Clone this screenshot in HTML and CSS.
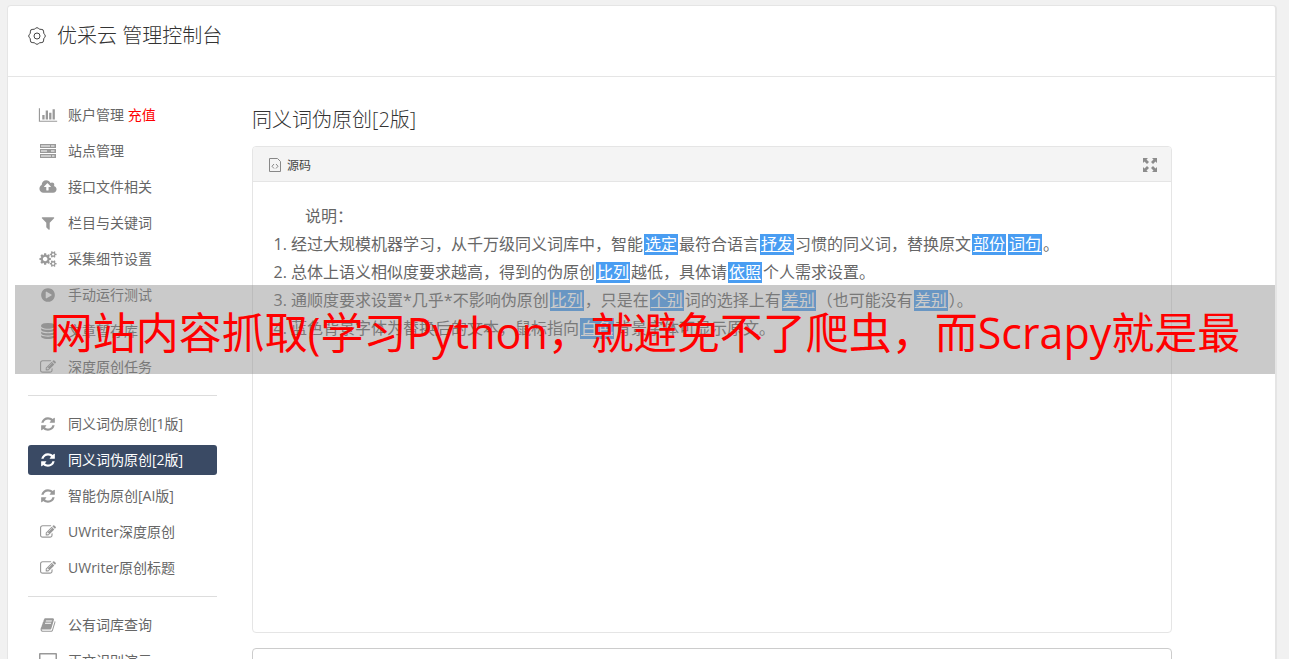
FILE: index.html
```html
<!DOCTYPE html>
<html lang="zh-CN">
<head>
  <meta charset="UTF-8">
  <meta name="viewport" content="width=device-width, initial-scale=1.0">
  <title>优采云 管理控制台</title>
  <link rel="stylesheet" href="styles.css">
</head>
<body>
  <svg class="sprite" aria-hidden="true">
    <symbol id="i-chart" viewBox="0 0 2048 1792"><path d="M640 896v512h-256v-512h256zm384-512v1024h-256v-1024h256zm1024 1152v128h-2048v-1536h128v1408h1920zm-640-896v768h-256v-768h256zm384-384v1152h-256v-1152h256z"/></symbol>
    <symbol id="i-server" viewBox="0 0 18 16"><path fill-rule="evenodd" d="M1 1h16v4H1zM2 2v2h9V2zM12 2.500v1h3.500v-1zM1 6h16v4H1zM2 7v2h6V7zM12 7.500v1h3.500v-1zM1 11h16v4H1zM2 12v2h10v-2zM13 12.500v1h2.500v-1z"/><path opacity=".5" d="M2 2h9v2H2zM2 7h6v2H2zM2 12h10v2H2z"/></symbol>
    <symbol id="i-cloud" viewBox="0 0 1920 1792"><path d="M1280 864q0-14-9-23l-352-352q-9-9-23-9t-23 9l-351 351q-10 12-10 24 0 14 9 23t23 9h224v352q0 13 9.500 22.500t22.500 9.500h192q13 0 22.500-9.500t9.500-22.500v-352h224q13 0 22.500-9.500t9.500-22.500zm640 288q0 159-112.500 271.500t-271.500 112.500h-1088q-185 0-316.500-131.500t-131.500-316.500q0-130 70-240t188-165q-2-30-2-43 0-212 150-362t362-150q156 0 285.500 87t188.500 231q71-62 166-62 106 0 181 75t75 181q0 76-41 138 130 31 213.500 135.500t83.500 238.500z"/></symbol>
    <symbol id="i-filter" viewBox="0 0 1792 1792"><path d="M1595 295q17 41-14 70l-493 493v742q0 42-39 59-13 5-25 5-27 0-45-19l-256-256q-19-19-19-45v-486l-493-493q-31-29-14-70 17-39 59-39h1280q42 0 59 39z"/></symbol>
    <symbol id="i-cogs" viewBox="0 0 1920 1792"><path d="M896 896q0-106-75-181t-181-75-181 75-75 181 75 181 181 75 181-75 75-181zm768 512q0-52-38-90t-90-38-90 38-38 90q0 53 37.500 90.500t90.500 37.500 90.500-37.500 37.500-90.500zm0-1024q0-52-38-90t-90-38-90 38-38 90q0 53 37.500 90.500t90.500 37.500 90.500-37.500 37.500-90.500zm-384 421v185q0 10-7 19.500t-16 10.500l-155 24q-11 35-32 76 34 48 90 115 7 11 7 20 0 12-7 19-23 30-82.500 89.500t-78.500 59.500q-11 0-21-7l-115-90q-37 19-77 31-11 108-23 155-7 24-30 24h-186q-11 0-20-7.500t-10-17.500l-23-153q-34-10-75-31l-118 89q-7 7-20 7-11 0-21-8-144-133-144-160 0-9 7-19 10-14 41-53t47-61q-23-44-35-82l-152-24q-10-1-17-9.500t-7-19.500v-185q0-10 7-19.500t16-10.500l155-24q11-35 32-76-34-48-90-115-7-11-7-20 0-12 7-20 22-30 82-89t79-59q11 0 21 7l115 90q34-18 77-32 11-108 23-154 7-24 30-24h186q11 0 20 7.500t10 17.500l23 153q34 10 75 31l118-89q8-7 20-7 11 0 21 8 144 133 144 160 0 8-7 19-12 16-42 54t-45 60q23 48 34 82l152 23q10 2 17 10.500t7 19.500zm640 533v140q0 16-149 31-12 27-30 52 51 113 51 138 0 4-4 7-122 71-124 71-8 0-46-47t-52-68q-20 2-30 2t-30-2q-14 21-52 68t-46 47q-2 0-124-71-4-3-4-7 0-25 51-138-18-25-30-52-149-15-149-31v-140q0-16 149-31 13-29 30-52-51-113-51-138 0-4 4-7 4-2 35-20t59-34 30-16q8 0 46 46.500t52 67.500q20-2 30-2t30 2q51-71 92-112l6-2q4 0 124 70 4 3 4 7 0 25-51 138 17 23 30 52 149 15 149 31zm0-1024v140q0 16-149 31-12 27-30 52 51 113 51 138 0 4-4 7-122 71-124 71-8 0-46-47t-52-68q-20 2-30 2t-30-2q-14 21-52 68t-46 47q-2 0-124-71-4-3-4-7 0-25 51-138-18-25-30-52-149-15-149-31v-140q0-16 149-31 13-29 30-52-51-113-51-138 0-4 4-7 4-2 35-20t59-34 30-16q8 0 46 46.500t52 67.500q20-2 30-2t30 2q51-71 92-112l6-2q4 0 124 70 4 3 4 7 0 25-51 138 17 23 30 52 149 15 149 31z"/></symbol>
    <symbol id="i-play" viewBox="0 0 1792 1792"><path d="M896 128q209 0 385.500 103t279.500 279.500 103 385.500-103 385.500-279.500 279.500-385.500 103-385.500-103-279.500-279.500-103-385.500 103-385.500 279.500-279.500 385.500-103zm384 823q32-18 32-55t-32-55l-544-320q-31-19-64-1-32 19-32 56v640q0 37 32 56 16 8 32 8 17 0 32-9z"/></symbol>
    <symbol id="i-database" viewBox="0 0 1792 1792"><path d="M896 768q237 0 443-43t325-127v170q0 69-103 128t-280 93.500-385 34.500-385-34.500-280-93.500-103-128v-170q119 84 325 127t443 43zm0 768q237 0 443-43t325-127v170q0 69-103 128t-280 93.500-385 34.500-385-34.500-280-93.500-103-128v-170q119 84 325 127t443 43zm0-384q237 0 443-43t325-127v170q0 69-103 128t-280 93.500-385 34.500-385-34.500-280-93.500-103-128v-170q119 84 325 127t443 43zm0-1152q208 0 385 34.500t280 93.500 103 128v128q0 69-103 128t-280 93.500-385 34.500-385-34.500-280-93.500-103-128v-128q0-69 103-128t280-93.500 385-34.500z"/></symbol>
    <symbol id="i-edit" viewBox="0 0 1792 1792"><path d="M888 1184l116-116-152-152-116 116v56h96v96h56zm440-720q-16-16-33 1l-350 350q-17 17-1 33t33-1l350-350q17-17 1-33zm80 594v190q0 119-84.500 203.500t-203.500 84.500h-832q-119 0-203.500-84.500t-84.500-203.500v-832q0-119 84.500-203.500t203.500-84.500h832q63 0 117 25 15 7 18 23 3 17-9 29l-49 49q-14 14-32 8-23-6-45-6h-832q-66 0-113 47t-47 113v832q0 66 47 113t113 47h832q66 0 113-47t47-113v-126q0-13 9-22l64-64q15-15 35-7t20 29zm-96-738l288 288-672 672h-288v-288zm444 132l-92 92-288-288 92-92q28-28 68-28t68 28l152 152q28 28 28 68t-28 68z"/></symbol>
    <symbol id="i-refresh" viewBox="0 0 1792 1792"><path d="M1639 1056q0 5-1 7-64 268-268 434.500t-478 166.500q-146 0-282.500-55t-243.500-157l-129 129q-19 19-45 19t-45-19-19-45v-448q0-26 19-45t45-19h448q26 0 45 19t19 45-19 45l-137 137q71 66 161 102t187 36q134 0 250-65t186-179q11-17 53-117 8-23 30-23h192q13 0 22.500 9.500t9.500 22.500zm25-800v448q0 26-19 45t-45 19h-448q-26 0-45-19t-19-45 19-45l138-138q-148-137-349-137-134 0-250 65t-186 179q-11 17-53 117-8 23-30 23h-199q-13 0-22.500-9.500t-9.500-22.500v-7q65-268 270-434.500t480-166.500q146 0 284 55.500t245 156.500l130-129q19-19 45-19t45 19 19 45z"/></symbol>
    <symbol id="i-book" viewBox="0 0 1792 1792"><path d="M1703 478q40 57 18 129l-275 906q-19 64-76.500 107.500t-122.500 43.500h-923q-77 0-148.500-53.500t-99.500-131.500q-24-67-2-127 0-4 3-27t4-37q1-8-3-21.500t-3-19.500q2-11 8-21t16.500-23.500 16.500-23.500q23-38 45-91.500t30-91.500q3-10 .5-30t-.5-28q3-11 17-28t17-23q21-36 42-92t25-90q1-9-2.500-32t.5-28q4-13 22-30.500t22-22.500q19-26 42.500-84.500t27.500-96.500q1-8-3-25.500t-2-26.500q2-8 9-18t18-23 17-21q8-12 16.500-30.500t15-35 16-36 19.500-32 26.500-23.500 36-11.500 47.500 5.500l-1 3q38-9 51-9h761q74 0 114 56t18 130l-274 906q-36 119-71.500 153.500t-128.500 34.500h-869q-27 0-38 15-11 16-1 43 24 70 144 70h923q29 0 56-15.500t35-41.500l300-987q7-22 5-57 38 15 59 43zm-1064 2q-4 13 2 22.500t20 9.500h608q13 0 25.500-9.500t16.500-22.500l21-64q4-13-2-22.500t-20-9.500h-608q-13 0-25.500 9.500t-16.500 22.500zm-83 256q-4 13 2 22.500t20 9.500h608q13 0 25.500-9.500t16.500-22.500l21-64q4-13-2-22.500t-20-9.500h-608q-13 0-25.500 9.500t-16.500 22.500z"/></symbol>
    <symbol id="i-screen" viewBox="0 0 18 16"><path fill-rule="evenodd" d="M1 0h16q1 0 1 1v10q0 1-1 1H1q-1 0-1-1V1q0-1 1-1zM1.500 1.500v9h15v-9zM6 13h6v2H6z"/></symbol>
  </svg>

  <div class="container">
    <header class="header">
      <svg class="gear" viewBox="0 0 18 18" aria-hidden="true">
        <path d="M7.300 1.500Q9-.3 10.700 1.500Q11.700 2.700 13.100 2.300Q15.700 2.100 15.700 4.900Q15.300 6.300 16.500 7.300Q18.300 9 16.500 10.700Q15.300 11.700 15.700 13.100Q15.700 15.900 13.100 15.700Q11.700 15.300 10.700 16.500Q9 18.300 7.300 16.500Q6.300 15.300 4.900 15.700Q2.100 15.900 2.300 13.100Q2.700 11.700 1.500 10.700Q-.3 9 1.500 7.300Q2.700 6.300 2.300 4.900Q2.100 2.100 4.900 2.300Q6.300 2.700 7.300 1.500z"/>
        <circle cx="9" cy="9" r="3"/>
      </svg>
      <h1>优采云 管理控制台</h1>
    </header>

    <div class="layout">
      <nav class="sidebar">
        <a href="#"><svg class="icon"><use href="#i-chart"/></svg><span>账户管理 <span class="pay">充值</span></span></a>
        <a href="#"><svg class="icon"><use href="#i-server"/></svg>站点管理</a>
        <a href="#"><svg class="icon"><use href="#i-cloud"/></svg>接口文件相关</a>
        <a href="#"><svg class="icon"><use href="#i-filter"/></svg>栏目与关键词</a>
        <a href="#"><svg class="icon"><use href="#i-cogs"/></svg>采集细节设置</a>
        <a href="#"><svg class="icon"><use href="#i-play"/></svg>手动运行测试</a>
        <a href="#"><svg class="icon"><use href="#i-database"/></svg>文章暂存库</a>
        <a href="#"><svg class="icon"><use href="#i-edit"/></svg>深度原创任务</a>
        <hr>
        <a href="#"><svg class="icon"><use href="#i-refresh"/></svg>同义词伪原创[1版]</a>
        <a href="#" class="active"><svg class="icon"><use href="#i-refresh"/></svg>同义词伪原创[2版]</a>
        <a href="#"><svg class="icon"><use href="#i-refresh"/></svg>智能伪原创[AI版]</a>
        <a href="#"><svg class="icon"><use href="#i-edit"/></svg>UWriter深度原创</a>
        <a href="#"><svg class="icon"><use href="#i-edit"/></svg>UWriter原创标题</a>
        <hr>
        <a href="#"><svg class="icon"><use href="#i-book"/></svg>公有词库查询</a>
        <a href="#"><svg class="icon"><use href="#i-screen"/></svg>正文识别演示</a>
      </nav>

      <main class="main">
        <h2>同义词伪原创[2版]</h2>
        <section class="editor">
          <div class="toolbar">
            <button type="button" class="source">
              <svg viewBox="0 0 12 14" aria-hidden="true"><path d="M.5 .5h8l3 3v10H.5V.5z"/><path d="M5 6L3 8.250 5 10.500M7 6l2 2.250L7 10.500"/></svg>
              源码
            </button>
            <button type="button" class="expand" aria-label="全屏">
              <svg viewBox="0 0 14 14" aria-hidden="true"><path d="M0 0h5L3.500 1.500 6 4 4 6 1.500 3.500 0 5zM14 0v5l-1.500-1.500L10 6 8 4l2.500-2.500L9 0zM0 14V9l1.500 1.500L4 8l2 2-2.500 2.500L5 14zM14 14H9l1.500-1.500L8 10l2-2 2.500 2.500L14 9z"/></svg>
            </button>
          </div>
          <div class="content">
            <p>说明：</p>
            <ol>
              <li>经过大规模机器学习，从千万级同义词库中，智能<u>选定</u>最符合语言<u>抒发</u>习惯的同义词，替换原文<u>部份</u><u>词句</u>。</li>
              <li>总体上语义相似度要求越高，得到的伪原创<u>比列</u>越低，具体请<u>依照</u>个人需求设置。</li>
              <li>通顺度要求设置*几乎*不影响伪原创<u>比列</u>，只是在<u>个别</u>词的选择上有<u>差别</u>（也可能没有<u>差别</u>）。</li>
              <li>蓝色背景字体为替换后的文本，鼠标指向<u>白色</u>背景字体可显示原文。</li>
            </ol>
          </div>
        </section>
        <textarea class="result" aria-label="结果"></textarea>
      </main>
    </div>
  </div>

  <div class="banner">网站内容抓取(学习Python，就避免不了爬虫，而Scrapy就是最</div>
</body>
</html>
```
FILE: styles.css
```css
* {
  box-sizing: border-box;
}
body {
  margin: 0;
  height: 100vh;
  overflow: hidden;
  background-color: #f1f1f1;
  color: #666;
  font-family: "Open Sans", "Noto Sans CJK SC", sans-serif;
  font-size: 14px;
}
.sprite {
  display: none;
}
.container {
  margin: 5px 12px 0 7px;
  background: #fff;
  border: 1px solid #e5e5e5;
  border-right-width: 2px;
  border-radius: 4px;
}
.header {
  display: flex;
  align-items: center;
  gap: 11px;
  height: 71px;
  padding: 0 20px 10px;
  border-bottom: 1px solid #e5e5e5;
}
.gear {
  width: 18px;
  height: 18px;
  fill: none;
  stroke: #444;
}
h1, h2 {
  margin: 0;
  color: #333;
  font-size: 20px;
  font-weight: 300;
  line-height: 30px;
}
.layout {
  display: flex;
  gap: 35px;
  padding: 23px 103px 20px 20px;
}
.sidebar {
  flex: 0 0 189px;
}
.sidebar a {
  display: flex;
  align-items: center;
  gap: 10px;
  height: 30px;
  margin-bottom: 6px;
  padding: 0 10px;
  border-radius: 3px;
  color: #666;
  line-height: 30px;
  text-decoration: none;
  white-space: nowrap;
}
.sidebar a.active {
  background: #3a4a64;
  color: #fff;
}
.sidebar hr {
  margin: 13px 0;
  border: 0;
  border-top: 1px solid #ddd;
}
.icon {
  width: 20px;
  height: 16px;
  fill: #999;
}
.active .icon {
  fill: #fff;
}
.pay {
  color: #f00;
}
.main {
  flex: 1;
  min-width: 0;
  padding-top: 5px;
}
.editor {
  height: 487px;
  margin: 11px 0 15px;
  border: 1px solid #e5e5e5;
  border-radius: 4px;
}
.toolbar {
  display: flex;
  align-items: center;
  justify-content: space-between;
  height: 35px;
  padding: 2px 14px 0 16px;
  background: #f4f4f4;
  border-bottom: 1px solid #e5e5e5;
  border-radius: 3px 3px 0 0;
}
.toolbar button {
  display: flex;
  align-items: center;
  gap: 6px;
  padding: 0;
  border: 0;
  background: none;
  color: #444;
  font: inherit;
  font-size: 12px;
}
.source svg {
  width: 12px;
  height: 14px;
  fill: none;
  stroke: #888;
}
.expand svg {
  width: 14px;
  height: 14px;
  fill: #8c8c8c;
}
.content {
  padding: 20px;
  font-size: 16px;
  line-height: 28px;
}
.content p {
  margin: 0;
  text-indent: 2em;
}
.content ol {
  margin: 0;
  padding-left: 18px;
}
.content u {
  display: inline-block;
  margin: 0 1px;
  padding: 0 1px;
  background: #499df2;
  color: #fff;
  line-height: 21px;
}
.result {
  display: block;
  width: 100%;
  height: 120px;
  border: 1px solid #ccc;
  border-radius: 4px;
  resize: none;
}
/* 页面上方的标题条 */
.banner {
  position: absolute;
  top: 285px;
  left: 15px;
  right: 14px;
  height: 89px;
  padding-top: 3px;
  background: rgba(143, 143, 143, 0.47);
  color: #f00;
  font-size: 43px;
  line-height: 89px;
  text-align: center;
  white-space: nowrap;
}
```
